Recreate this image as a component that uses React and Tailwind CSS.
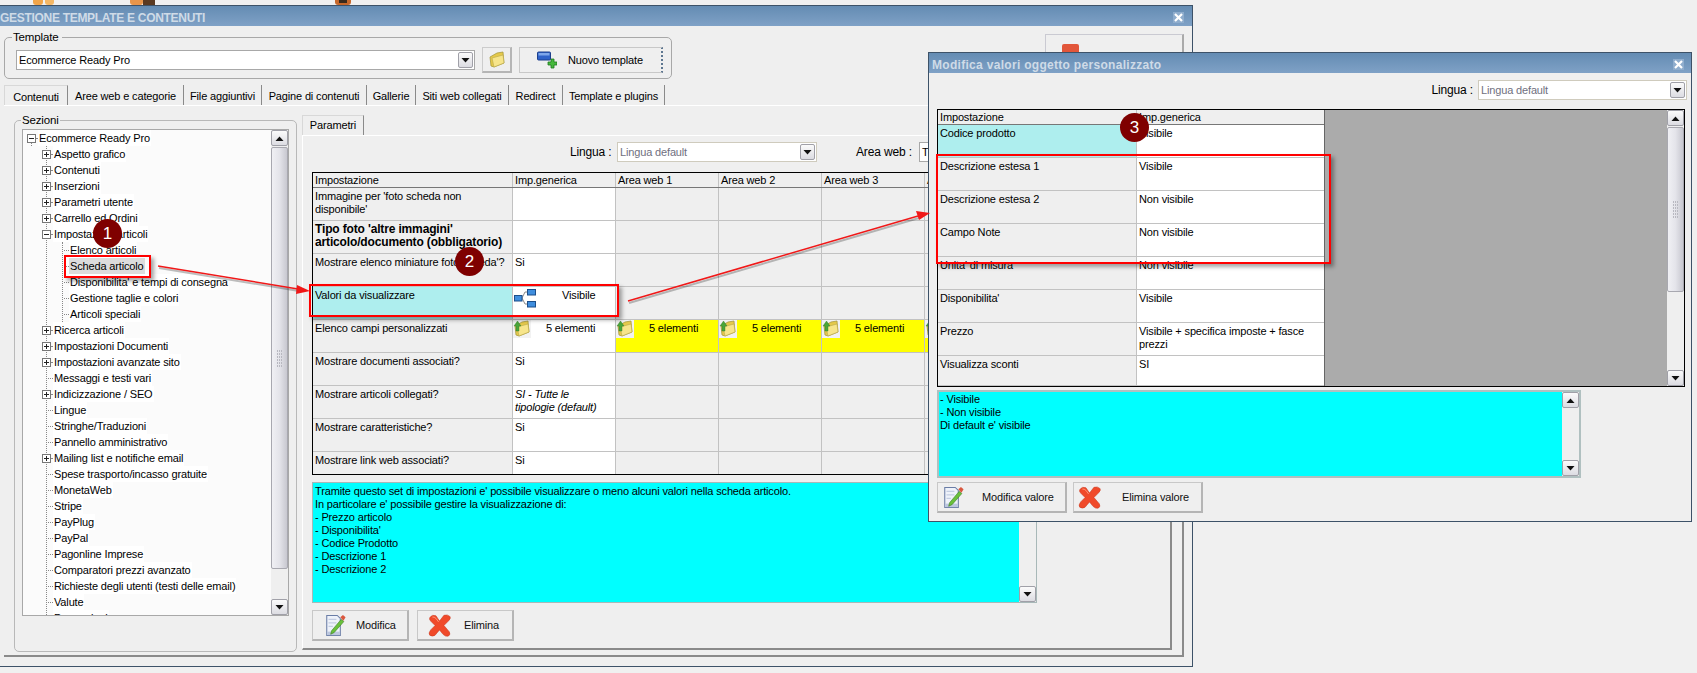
const FONT = "font-['Liberation_Sans',sans-serif]";

function Tri({ up }) {
  return (
    <svg width="9" height="5" viewBox="0 0 9 5" className="shrink-0">
      <path d={up ? "M0.5 5 L4.5 0.5 L8.5 5 Z" : "M0.5 0 L4.5 4.5 L8.5 0 Z"} fill="#111" />
    </svg>
  );
}

function ArrowBtn({ up, w = "w-[16px]", h = "h-[16px]" }) {
  return (
    <div className={`${w} ${h} shrink-0 flex items-center justify-center rounded-[2px] border border-[#a0a0a8] bg-gradient-to-b from-[#fbfbfb] to-[#dcdce2]`}>
      <Tri up={up} />
    </div>
  );
}

function Combo({ text, disabled, w }) {
  return (
    <div className={`h-[20px] ${w} flex items-center justify-between border ${disabled ? "border-[#cfcbbd] text-[#6f6f80]" : "border-[#a8a8a8] text-black"} bg-white pl-[2px] pr-[1px]`}>
      <span className="leading-none">{text}</span>
      <ArrowBtn w="w-[15px]" h="h-[16px]" />
    </div>
  );
}

function FolderIcon({ size = 18, arrow = true }) {
  return (
    <svg width={size} height={size} viewBox="0 0 18 18" className="shrink-0">
      <path d="M2 6 L9 2 L15 1 L16 12 L6 16 L3 15 Z" fill="#e5c94a" stroke="#a89a40" strokeWidth="0.8" />
      <path d="M4 7 L15 4 L16 12 L6 16 Z" fill="#f7e58b" stroke="#b9a74c" strokeWidth="0.6" />
      {arrow && <path d="M1 6 L4.5 1 L8 6 L6 6 L6 11 L3 11 L3 6 Z" fill="#4aa53a" stroke="#2f7a24" strokeWidth="0.4" />}
    </svg>
  );
}

function TreeIcon() {
  return (
    <svg width="22" height="19" viewBox="0 0 22 19" className="shrink-0">
      <path d="M8 9 L11 3 L13 3 M8 9 L11 15 L13 15" stroke="#8a8a8a" strokeWidth="1" fill="none" />
      <rect x="0.5" y="6.5" width="7.5" height="5.5" fill="#3f8ede" stroke="#1d4f8a" />
      <rect x="13.5" y="0.5" width="8" height="5.5" fill="#3f8ede" stroke="#1d4f8a" />
      <rect x="13.5" y="12.5" width="8" height="5.5" fill="#3f8ede" stroke="#1d4f8a" />
    </svg>
  );
}

function NewIcon() {
  return (
    <svg width="20" height="18" viewBox="0 0 20 18" className="shrink-0">
      <rect x="0.5" y="1" width="13" height="8" rx="1" fill="#2f62c9" stroke="#1c3f8c" />
      <rect x="1.5" y="2" width="11" height="2.5" fill="#7ea6ea" />
      <path d="M11 11 h3 v-3 h3 v3 h3 v3 h-3 v3 h-3 v-3 h-3 Z" fill="#46b83c" stroke="#1e7a1e" strokeWidth="0.8" />
    </svg>
  );
}

function EditIcon() {
  return (
    <svg width="21" height="23" viewBox="0 0 24 26" className="shrink-0">
      <path d="M2 1.5 H14 L17.5 5 V24.5 H2 Z" fill="#eef2fa" stroke="#6a7da6" strokeWidth="1.2" />
      <path d="M4 6 H13 M4 10 H13 M4 14 H9" stroke="#c3cde2" strokeWidth="1.2" />
      <path d="M2.5 20 H17 V24 H2.5 Z" fill="#bcc7df" />
      <path d="M7.5 19 L18.5 6 L21.5 8.5 L10.5 21 L6.5 23 Z" fill="#69c13b" stroke="#3c7d22" strokeWidth="0.7" />
      <path d="M17.5 3.5 L20.5 1 L23.5 3.5 L21 7.5 Z" fill="#d9583f" />
    </svg>
  );
}

function DelIcon() {
  return (
    <svg width="23" height="23" viewBox="0 0 26 26" className="shrink-0">
      <path d="M2 4 Q5 0 9 2 L13 8 L18 1.5 Q22 0 25 3 Q26 5 23 8 L18 13 L24 20 Q26 23 23 25 Q20 26 17 23 L13 18 L8 24 Q5 26 2 24 Q0 22 3 18 L8 13 L3 8 Q1 6 2 4 Z" fill="#f04a2a" stroke="#c9381c" strokeWidth="0.6" />
      <path d="M5 3.5 Q7 3 9 5 L12 9" stroke="#ff9c80" strokeWidth="1" fill="none" />
    </svg>
  );
}

function Btn({ icon, label, w, spacing }) {
  return (
    <div className={`${w} ${spacing} h-[31px] flex items-center border-t border-l border-[#c8c8c8] border-r-2 border-b-2 border-r-[#b5b5b5] border-b-[#b5b5b5] bg-[#efefef] text-[#111]`}>
      {icon}
      <span className="leading-none whitespace-nowrap">{label}</span>
    </div>
  );
}

function Scroll({ thumbClass, w = "w-[17px]" }) {
  return (
    <div className={`${w} h-full shrink-0 flex flex-col bg-[#efefef]`}>
      <ArrowBtn up w="w-full" />
      <div className={`mt-[1px] relative flex items-center justify-center ${thumbClass} rounded-[2px] border border-[#a8a8b0] bg-gradient-to-r from-[#f0f0f4] via-[#e4e4ea] to-[#c8c8d0]`}>
        <div className="grid grid-cols-3 gap-[1px]">
          {Array.from({ length: 18 }).map((_, i) => (
            <div key={i} className="w-[1px] h-[2px] bg-[#b8b8c0]" />
          ))}
        </div>
      </div>
      <div className="flex-1" />
      <ArrowBtn w="w-full" />
    </div>
  );
}

function CloseBox() {
  return (
    <div className="w-[11px] h-[11px] bg-[#8fadcd] flex items-center justify-center">
      <svg width="9" height="9" viewBox="0 0 9 9">
        <path d="M1 1 L8 8 M8 1 L1 8" stroke="#fff" strokeWidth="2.2" />
      </svg>
    </div>
  );
}

const tree = [
  [0, "Ecommerce Ready Pro", "minus"],
  [1, "Aspetto grafico", "plus"],
  [1, "Contenuti", "plus"],
  [1, "Inserzioni", "plus"],
  [1, "Parametri utente", "plus"],
  [1, "Carrello ed Ordini", "plus"],
  [1, "Impostazioni articoli", "minus"],
  [2, "Elenco articoli"],
  [2, "Scheda articolo", null, true],
  [2, "Disponibilita' e tempi di consegna"],
  [2, "Gestione taglie e colori"],
  [2, "Articoli speciali"],
  [1, "Ricerca articoli", "plus"],
  [1, "Impostazioni Documenti", "plus"],
  [1, "Impostazioni avanzate sito", "plus"],
  [1, "Messaggi e testi vari"],
  [1, "Indicizzazione / SEO", "plus"],
  [1, "Lingue"],
  [1, "Stringhe/Traduzioni"],
  [1, "Pannello amministrativo"],
  [1, "Mailing list e notifiche email", "plus"],
  [1, "Spese trasporto/incasso gratuite"],
  [1, "MonetaWeb"],
  [1, "Stripe"],
  [1, "PayPlug"],
  [1, "PayPal"],
  [1, "Pagonline Imprese"],
  [1, "Comparatori prezzi avanzato"],
  [1, "Richieste degli utenti (testi delle email)"],
  [1, "Valute"],
  [1, "Promozioni"],
];

function Box({ kind }) {
  return (
    <div className="w-[9px] h-[9px] border border-[#777] bg-white relative shrink-0">
      <div className="absolute left-[1px] right-[1px] top-[3px] h-[1px] bg-[#222]" />
      {kind === "plus" && <div className="absolute top-[1px] bottom-[1px] left-[3px] w-[1px] bg-[#222]" />}
    </div>
  );
}

function TreeRow({ level, label, kind, sel }) {
  const indent = level === 0 ? "pl-[4px]" : level === 1 ? "pl-[19px]" : "pl-[35px]";
  return (
    <div className={`h-[16px] flex items-center shrink-0 ${indent}`}>
      {kind ? <Box kind={kind} /> : <div className="w-[9px] shrink-0" />}
      <div className={`border-t border-dotted border-[#888] shrink-0 ${kind ? "w-[2px]" : "w-[5px] -ml-[3px]"}`} />
      <span className={`leading-[16px] px-[1px] whitespace-nowrap ${sel ? "bg-[#dcdcdc]" : "bg-white"}`}>{label}</span>
    </div>
  );
}

const mainRows = [
  { a: <>Immagine per 'foto scheda non disponibile'</> },
  { a: <b className="text-[12px] leading-[13px]">Tipo foto 'altre immagini' articolo/documento (obbligatorio)</b> },
  { a: <span className="whitespace-nowrap">Mostrare elenco miniature foto scheda'?</span>, v: "Si" },
  { a: "Valori da visualizzare", cyan: true, v: "tree" },
  { a: "Elenco campi personalizzati", v: "folder", yellow: true },
  { a: "Mostrare documenti associati?", v: "Si" },
  { a: "Mostrare articoli collegati?", v: <i>SI - Tutte le<br />tipologie (default)</i> },
  { a: "Mostrare caratteristiche?", v: "Si" },
  { a: "Mostrare link web associati?", v: "Si", short: true },
];

function Cell({ className = "", children }) {
  return <div className={`px-[2px] pt-[2px] leading-[13px] border-r border-b border-[#c2c2c2] ${className}`}>{children}</div>;
}

function FolderCell({ chip }) {
  return (
    <div className="flex -ml-[2px] -mt-[2px]">
      <div className={chip}><FolderIcon /></div>
      <span className="ml-[15px] mt-[2px]">5 elementi</span>
    </div>
  );
}

function MainTable() {
  return (
    <div className="w-[725px] h-[303px] border border-black border-r-[#c2c2c2] overflow-hidden bg-[#efefef]">
      <div className="grid grid-cols-[200px_103px_103px_103px_103px_103px_9px] h-[15px] border-b border-[#777]">
        {["Impostazione", "Imp.generica", "Area web 1", "Area web 2", "Area web 3", "Area web 4", ""].map((t, i) => (
          <div key={i} className="pl-[2px] leading-[14px] border-r border-[#c2c2c2] whitespace-nowrap overflow-hidden">{t}</div>
        ))}
      </div>
      {mainRows.map((r, i) => (
        <div key={i} className={`grid grid-cols-[200px_103px_103px_103px_103px_103px_9px] ${r.short ? "h-[24px]" : "h-[33px]"}`}>
          <Cell className={r.cyan ? "bg-[#aeeeee]" : "bg-[#efefef]"}>{r.a}</Cell>
          <Cell className="bg-white">
            {r.v === "tree" ? (
              <div className="flex -ml-[1px]"><TreeIcon /><span className="ml-[26px]">Visibile</span></div>
            ) : r.v === "folder" ? (
              <FolderCell chip="bg-[#f2f2f2]" />
            ) : r.v}
          </Cell>
          {[0, 1, 2, 3].map((k) => (
            <Cell key={k} className={r.yellow ? "bg-[#ffff00]" : ""}>
              {r.yellow && <FolderCell chip="bg-[#f2f2f2]" />}
            </Cell>
          ))}
          <Cell />
        </div>
      ))}
    </div>
  );
}

const modalRows = [
  ["Codice prodotto", "Visibile", true],
  ["Descrizione estesa 1", "Visibile"],
  ["Descrizione estesa 2", "Non visibile"],
  ["Campo Note", "Non visibile"],
  ["Unita' di misura", "Non visibile"],
  ["Disponibilita'", "Visibile"],
  ["Prezzo", "Visibile + specifica imposte + fasce prezzi"],
  ["Visualizza sconti", "SI", false, true],
];

function ModalTable() {
  return (
    <div className="w-[748px] h-[278px] border border-black flex bg-[#ababab]">
      <div className="w-[387px] shrink-0 border-r border-[#666]">
        <div className="grid grid-cols-[199px_187px] h-[15px] border-b border-[#777] bg-[#efefef]">
          <div className="pl-[2px] leading-[14px] border-r border-[#c2c2c2]">Impostazione</div>
          <div className="pl-[2px] leading-[14px]">Imp.generica</div>
        </div>
        {modalRows.map(([a, b, cy, last], i) => (
          <div key={i} className={`grid grid-cols-[199px_187px] ${last ? "h-[30px]" : "h-[33px]"}`}>
            <Cell className={cy ? "bg-[#aeeeee]" : "bg-[#efefef]"}>{a}</Cell>
            <Cell className="bg-white border-r-0">{b}</Cell>
          </div>
        ))}
      </div>
      <div className="flex-1" />
      <Scroll thumbClass="h-[165px]" w="w-[17px]" />
    </div>
  );
}

function Circle({ n, className }) {
  return (
    <div className={`absolute w-[29px] h-[29px] rounded-full bg-[#7f0000] text-white flex items-center justify-center text-[17px] ${className}`}>{n}</div>
  );
}

const tabs = [
  ["Contenuti", "w-[64px]"],
  ["Aree web e categorie", "w-[116px]"],
  ["File aggiuntivi", "w-[78px]"],
  ["Pagine di contenuti", "w-[105px]"],
  ["Gallerie", "w-[49px]"],
  ["Siti web collegati", "w-[93px]"],
  ["Redirect", "w-[54px]"],
  ["Template e plugins", "w-[102px]"],
];

export default function App() {
  return (
    <div className={`relative w-[1697px] h-[673px] overflow-hidden bg-[#f0f0f0] pt-[5px] text-[11px] tracking-[-0.15px] text-black ${FONT}`}>
      {/* icons peeking above the window */}
      <div className="absolute left-[33px] top-0 flex gap-[2px]">
        <div className="w-[10px] h-[5px] rounded-b-[3px] bg-[#f0a54a]" />
        <div className="w-[9px] h-[5px] rounded-b-[3px] bg-[#f3b765]" />
      </div>
      <div className="absolute left-[130px] top-0 flex">
        <div className="w-[13px] h-[5px] rounded-b-[3px] bg-[#e8954a]" />
        <div className="w-[12px] h-[5px] bg-[#5a3a22]" />
      </div>
      <div className="absolute left-[335px] top-0 w-[16px] h-[5px] flex justify-center rounded-b-[3px] bg-[#c6682c]">
        <div className="w-[8px] h-[3px] bg-[#3a2a1c]" />
      </div>

      {/* main window */}
      <div className="ml-[-2px] w-[1195px] h-[662px] border border-[#3d5268] bg-[#efefef]">
        <div className="h-[20px] bg-gradient-to-b from-[#648cb3] to-[#7fa1c6] flex items-center justify-between pl-[1px] pr-[8px] pt-[3px]">
          <span className="text-[12px] font-bold tracking-[-0.3px] text-[#cfdbe7]">GESTIONE TEMPLATE E CONTENUTI</span>
          <CloseBox />
        </div>

        <div className="pl-[5px] pr-[8px] pt-[6px]">
          {/* top row */}
          <div className="flex items-start">
            <fieldset className="w-[668px] h-[47px] shrink-0 border border-[#a8a8a8] rounded-[5px] pl-[11px] pr-[4px]">
              <legend className="-ml-[4px] pr-[4px] pl-[1px] leading-[10px] text-[11.5px]">Template</legend>
              <div className="flex items-center mt-[5px]">
                <Combo text="Ecommerce Ready Pro" w="w-[459px]" />
                <div className="ml-[7px] w-[30px] h-[26px] border-t border-l border-[#ccc] border-r-2 border-b-2 border-r-[#b5b5b5] border-b-[#b5b5b5] flex items-center justify-center">
                  <FolderIcon arrow={false} />
                </div>
                <div className="ml-[7px] w-[144px] h-[26px] flex items-center pl-[17px] gap-[11px] border border-[#c8c8c8] border-r-2 border-r-[#5d7690] [border-right-style:dotted]">
                  <NewIcon />
                  <span className="whitespace-nowrap">Nuovo template</span>
                </div>
              </div>
            </fieldset>
            <div className="ml-[373px] mt-[2px] w-[139px] h-[40px] shrink-0 border border-[#cacad2] border-r-2 border-r-[#aaa] flex pl-[16px] pt-[9px]">
              <div className="w-[17px] h-[17px] rounded-[2px] bg-[#e2563a]" />
            </div>
          </div>

          {/* tabs */}
          <div className="flex mt-[6px] h-[20px]">
            {tabs.map(([t, w], i) => (
              <div key={t} className={`${w} shrink-0 h-[20px] pt-[3px] flex items-center justify-center border-r border-[#8a8a8a] ${i === 0 ? "border-t border-l border-[#d8d8d8] border-r-[#8a8a8a] bg-[#efefef]" : ""} whitespace-nowrap`}>{t}</div>
            ))}
          </div>

          {/* content area */}
          <div className="w-[1180px] h-[552px] border-t border-white border-r-2 border-b-2 border-r-[#8a8a8a] border-b-[#8a8a8a] flex pl-[10px] pr-[10px] pb-[5px]">
            {/* Sezioni */}
            <fieldset className="w-[283px] h-[537px] shrink-0 mt-[9px] border border-[#b8b8b8] rounded-[5px] px-[7px]">
              <legend className="-ml-[1px] px-[1px] leading-[10px] text-[11.5px]">Sezioni</legend>
              <div className="h-[487px] mt-[4px] border border-[#a8a8a8] bg-[#fbfbfb] flex">
                <div className="flex-1 h-[485px] overflow-hidden flex flex-col relative">
                  <div className="absolute left-[8px] top-[12px] h-[4px] border-l border-dotted border-[#888]" />
                  <div className="absolute left-[23px] top-[16px] bottom-0 border-l border-dotted border-[#888]" />
                  <div className="absolute left-[39px] top-[112px] h-[80px] border-l border-dotted border-[#888]" />
                  <div className="relative">
                    {tree.map(([l, t, k, s]) => <TreeRow key={t} level={l} label={t} kind={k} sel={s} />)}
                  </div>
                </div>
                <Scroll thumbClass="h-[422px]" />
              </div>
            </fieldset>

            {/* Parametri panel */}
            <div className="ml-[5px] flex-1 flex flex-col">
              <div className="flex mt-[9px] h-[20px] shrink-0">
                <div className="w-[62px] flex items-center justify-center border-t border-l border-r border-t-[#d8d8d8] border-l-[#d8d8d8] border-r-[#8a8a8a]">Parametri</div>
              </div>
              <div className="flex-1 border-t border-l border-white border-r-2 border-b-2 border-r-[#8a8a8a] border-b-[#8a8a8a] pl-[9px]">
                <div className="flex items-center h-[20px] mt-[6px]">
                  <span className="ml-[258px] w-[47px] text-[12px]">Lingua :</span>
                  <Combo text="Lingua default" disabled w="w-[200px]" />
                  <span className="ml-[39px] w-[63px] text-[12px] whitespace-nowrap">Area web :</span>
                  <Combo text="Tutte" w="w-[100px]" />
                </div>
                <div className="mt-[10px]"><MainTable /></div>
                <div className="mt-[7px] w-[725px] h-[121px] border border-[#a8b8b8] bg-[#00ffff] flex">
                  <div className="flex-1 pl-[2px] pt-[2px] leading-[13px]">
                    Tramite questo set di impostazioni e' possibile visualizzare o meno alcuni valori nella scheda articolo.<br />
                    In particolare e' possibile gestire la visualizzazione di:<br />
                    - Prezzo articolo<br />- Disponibilita'<br />- Codice Prodotto<br />- Descrizione 1<br />- Descrizione 2
                  </div>
                  <div className="w-[17px] h-full flex flex-col justify-end bg-[#efefef]"><ArrowBtn w="w-full" /></div>
                </div>
                <div className="flex mt-[7px] gap-[8px]">
                  <Btn icon={<EditIcon />} label="Modifica" w="w-[97px]" spacing="pl-[12px] gap-[10px]" />
                  <Btn icon={<DelIcon />} label="Elimina" w="w-[97px]" spacing="pl-[10px] gap-[13px]" />
                </div>
              </div>
            </div>
          </div>
        </div>
      </div>

      {/* modal window */}
      <div className="absolute left-[928px] top-[52px] w-[764px] h-[470px] border border-[#3d5268] bg-[#efefef]">
        <div className="h-[20px] bg-gradient-to-b from-[#648cb3] to-[#7fa1c6] flex items-center justify-between pl-[3px] pr-[7px] pt-[3px]">
          <span className="text-[12px] font-bold tracking-[0.3px] text-[#cfdbe7]">Modifica valori oggetto personalizzato</span>
          <CloseBox />
        </div>
        <div className="pl-[8px] pr-[4px]">
          <div className="flex justify-end items-center h-[20px] mt-[7px] gap-[5px]">
            <span className="text-[12px]">Lingua :</span>
            <Combo text="Lingua default" disabled w="w-[209px]" />
          </div>
          <div className="mt-[9px]"><ModalTable /></div>
          <div className="mt-[3px] w-[644px] h-[88px] border-2 border-[#b0c0c0] bg-[#00ffff] flex">
            <div className="flex-1 pl-[1px] pt-[1px] leading-[13px]">
              - Visibile<br />- Non visibile<br />Di default e' visibile
            </div>
            <div className="w-[17px] h-full flex flex-col justify-between bg-[#efefef]"><ArrowBtn up w="w-full" /><ArrowBtn w="w-full" /></div>
          </div>
          <div className="flex mt-[4px] gap-[6px]">
            <Btn icon={<EditIcon />} label="Modifica valore" w="w-[130px]" spacing="pl-[5px] gap-[18px]" />
            <Btn icon={<DelIcon />} label="Elimina valore" w="w-[130px]" spacing="pl-[4px] gap-[21px]" />
          </div>
        </div>
      </div>

      {/* annotations */}
      <div className="absolute left-[64px] top-[255px] w-[87px] h-[23px] border-2 border-[#ff0000] shadow-[3px_3px_4px_rgba(0,0,0,0.35)]" />
      <div className="absolute left-[309px] top-[284px] w-[310px] h-[33px] border-2 border-[#ff0000] shadow-[3px_3px_4px_rgba(0,0,0,0.35)]" />
      <div className="absolute left-[936px] top-[154px] w-[395px] h-[110px] border-2 border-[#ff0000] shadow-[3px_3px_4px_rgba(0,0,0,0.35)]" />
      <svg className="absolute left-0 top-0" width="1697" height="673" viewBox="0 0 1697 673">
        <g stroke="#000" strokeOpacity="0.25" strokeWidth="2" transform="translate(1 2)" fill="none">
          <path d="M158 266 L298 289" />
          <path d="M628 301 L918 216" />
        </g>
        <path d="M158 266 L298 289" stroke="#f01818" strokeWidth="1.5" fill="none" />
        <path d="M310 291 L297 285 L296 294 Z" fill="#f01818" />
        <path d="M628 301 L918 216" stroke="#f01818" strokeWidth="1.5" fill="none" />
        <path d="M930 213 L916 211 L919 220 Z" fill="#f01818" />
      </svg>
      <Circle n="1" className="left-[93px] top-[219px]" />
      <Circle n="2" className="left-[455px] top-[247px]" />
      <Circle n="3" className="left-[1120px] top-[113px]" />
    </div>
  );
}
